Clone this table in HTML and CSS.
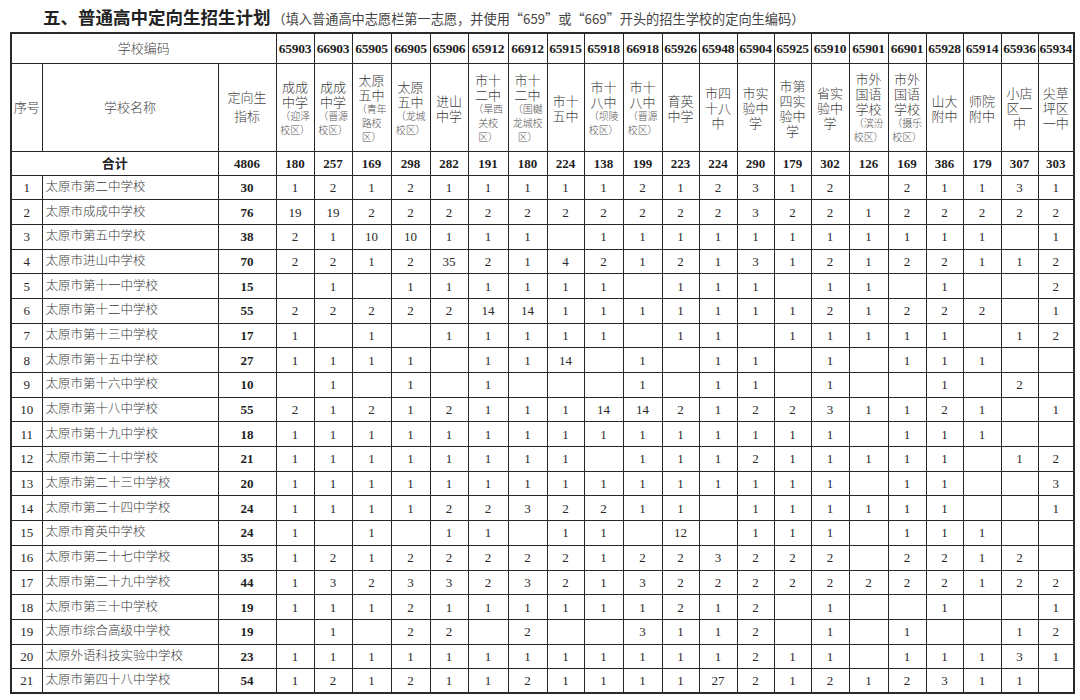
FILE: index.html
```html
<!DOCTYPE html>
<html lang="zh-CN">
<head>
<meta charset="utf-8">
<title>普通高中定向生招生计划</title>
<link rel="stylesheet" href="styles.css">
</head>
<body>
<div class="title"><span class="main">五、普通高中定向生招生计划</span><span class="note">（填入普通高中志愿栏第一志愿，并使用“659”或“669”开头的招生学校的定向生编码）</span></div>
<table class="plan">
<colgroup>
<col class="c-no"><col class="c-name"><col class="c-quota">
<col class="w38"><col class="w38"><col class="w39"><col class="w39"><col class="w38"><col class="w40"><col class="w39"><col class="w37"><col class="w39"><col class="w39"><col class="w37"><col class="w38"><col class="w37"><col class="w37"><col class="w38"><col class="w39"><col class="w38"><col class="w37"><col class="w38"><col class="w37"><col class="w36">
</colgroup>
<tr class="h1">
<td colspan="3" class="cn">学校编码</td>
<td class="code">65903</td><td class="code">66903</td><td class="code">65905</td><td class="code">66905</td><td class="code">65906</td><td class="code">65912</td><td class="code">66912</td><td class="code">65915</td><td class="code">65918</td><td class="code">66918</td><td class="code">65926</td><td class="code">65948</td><td class="code">65904</td><td class="code">65925</td><td class="code">65910</td><td class="code">65901</td><td class="code">66901</td><td class="code">65928</td><td class="code">65914</td><td class="code">65936</td><td class="code">65934</td>
</tr>
<tr class="h2">
<td class="cn">序号</td>
<td class="cn">学校名称</td>
<td class="cn quota-h">定向生<br>指标</td>
<td class="sch"><span class="b">成成<br>中学</span><span class="s">（迎泽<br>校区）</span></td>
<td class="sch"><span class="b">成成<br>中学</span><span class="s">（晋源<br>校区）</span></td>
<td class="sch"><span class="b">太原<br>五中</span><span class="s">（青年<br>路校<br>区）</span></td>
<td class="sch"><span class="b">太原<br>五中</span><span class="s">（龙城<br>校区）</span></td>
<td class="sch"><span class="b">进山<br>中学</span></td>
<td class="sch"><span class="b">市十<br>二中</span><span class="s">（旱西<br>关校<br>区）</span></td>
<td class="sch"><span class="b">市十<br>二中</span><span class="s">（国樾<br>龙城校<br>区）</span></td>
<td class="sch"><span class="b">市十<br>五中</span></td>
<td class="sch"><span class="b">市十<br>八中</span><span class="s">（坝陵<br>校区）</span></td>
<td class="sch"><span class="b">市十<br>八中</span><span class="s">（晋源<br>校区）</span></td>
<td class="sch"><span class="b">育英<br>中学</span></td>
<td class="sch"><span class="b">市四<br>十八<br>中</span></td>
<td class="sch"><span class="b">市实<br>验中<br>学</span></td>
<td class="sch"><span class="b">市第<br>四实<br>验中<br>学</span></td>
<td class="sch"><span class="b">省实<br>验中<br>学</span></td>
<td class="sch"><span class="b">市外<br>国语<br>学校</span><span class="s">（滨汾<br>校区）</span></td>
<td class="sch"><span class="b">市外<br>国语<br>学校</span><span class="s">（摄乐<br>校区）</span></td>
<td class="sch"><span class="b">山大<br>附中</span></td>
<td class="sch"><span class="b">师院<br>附中</span></td>
<td class="sch"><span class="b">小店<br>区一<br>中</span></td>
<td class="sch"><span class="b">尖草<br>坪区<br>一中</span></td>
</tr>
<tr class="tot">
<td colspan="2" class="cn bold">合计</td>
<td class="bold">4806</td>
<td class="bold">180</td><td class="bold">257</td><td class="bold">169</td><td class="bold">298</td><td class="bold">282</td><td class="bold">191</td><td class="bold">180</td><td class="bold">224</td><td class="bold">138</td><td class="bold">199</td><td class="bold">223</td><td class="bold">224</td><td class="bold">290</td><td class="bold">179</td><td class="bold">302</td><td class="bold">126</td><td class="bold">169</td><td class="bold">386</td><td class="bold">179</td><td class="bold">307</td><td class="bold">303</td>
</tr>
<tr class="row"><td>1</td><td class="name">太原市第二中学校</td><td class="bold">30</td><td>1</td><td>2</td><td>1</td><td>2</td><td>1</td><td>1</td><td>1</td><td>1</td><td>1</td><td>2</td><td>1</td><td>2</td><td>3</td><td>1</td><td>2</td><td></td><td>2</td><td>1</td><td>1</td><td>3</td><td>1</td></tr>
<tr class="row"><td>2</td><td class="name">太原市成成中学校</td><td class="bold">76</td><td>19</td><td>19</td><td>2</td><td>2</td><td>2</td><td>2</td><td>2</td><td>2</td><td>2</td><td>2</td><td>2</td><td>2</td><td>3</td><td>2</td><td>2</td><td>1</td><td>2</td><td>2</td><td>2</td><td>2</td><td>2</td></tr>
<tr class="row"><td>3</td><td class="name">太原市第五中学校</td><td class="bold">38</td><td>2</td><td>1</td><td>10</td><td>10</td><td>1</td><td>1</td><td>1</td><td></td><td>1</td><td>1</td><td>1</td><td>1</td><td>1</td><td>1</td><td>1</td><td>1</td><td>1</td><td>1</td><td>1</td><td></td><td>1</td></tr>
<tr class="row"><td>4</td><td class="name">太原市进山中学校</td><td class="bold">70</td><td>2</td><td>2</td><td>1</td><td>2</td><td>35</td><td>2</td><td>1</td><td>4</td><td>2</td><td>1</td><td>2</td><td>1</td><td>3</td><td>1</td><td>2</td><td>1</td><td>2</td><td>2</td><td>1</td><td>1</td><td>2</td></tr>
<tr class="row"><td>5</td><td class="name">太原市第十一中学校</td><td class="bold">15</td><td></td><td>1</td><td></td><td>1</td><td>1</td><td>1</td><td>1</td><td>1</td><td>1</td><td></td><td>1</td><td>1</td><td>1</td><td></td><td>1</td><td>1</td><td></td><td>1</td><td></td><td></td><td>2</td></tr>
<tr class="row"><td>6</td><td class="name">太原市第十二中学校</td><td class="bold">55</td><td>2</td><td>2</td><td>2</td><td>2</td><td>2</td><td>14</td><td>14</td><td>1</td><td>1</td><td>1</td><td>1</td><td>1</td><td>1</td><td>1</td><td>2</td><td>1</td><td>2</td><td>2</td><td>2</td><td></td><td>1</td></tr>
<tr class="row"><td>7</td><td class="name">太原市第十三中学校</td><td class="bold">17</td><td>1</td><td></td><td>1</td><td></td><td>1</td><td>1</td><td>1</td><td>1</td><td>1</td><td></td><td>1</td><td>1</td><td></td><td>1</td><td>1</td><td>1</td><td>1</td><td>1</td><td></td><td>1</td><td>2</td></tr>
<tr class="row"><td>8</td><td class="name">太原市第十五中学校</td><td class="bold">27</td><td>1</td><td>1</td><td>1</td><td>1</td><td></td><td>1</td><td>1</td><td>14</td><td></td><td>1</td><td></td><td>1</td><td>1</td><td></td><td>1</td><td></td><td>1</td><td>1</td><td>1</td><td></td><td></td></tr>
<tr class="row"><td>9</td><td class="name">太原市第十六中学校</td><td class="bold">10</td><td></td><td>1</td><td></td><td>1</td><td></td><td>1</td><td></td><td></td><td></td><td>1</td><td></td><td>1</td><td>1</td><td></td><td>1</td><td></td><td></td><td>1</td><td></td><td>2</td><td></td></tr>
<tr class="row"><td>10</td><td class="name">太原市第十八中学校</td><td class="bold">55</td><td>2</td><td>1</td><td>2</td><td>1</td><td>2</td><td>1</td><td>1</td><td>1</td><td>14</td><td>14</td><td>2</td><td>1</td><td>2</td><td>2</td><td>3</td><td>1</td><td>1</td><td>2</td><td>1</td><td></td><td>1</td></tr>
<tr class="row"><td>11</td><td class="name">太原市第十九中学校</td><td class="bold">18</td><td>1</td><td>1</td><td>1</td><td>1</td><td>1</td><td>1</td><td>1</td><td>1</td><td>1</td><td>1</td><td>1</td><td>1</td><td>1</td><td>1</td><td>1</td><td></td><td>1</td><td>1</td><td>1</td><td></td><td></td></tr>
<tr class="row"><td>12</td><td class="name">太原市第二十中学校</td><td class="bold">21</td><td>1</td><td>1</td><td>1</td><td>1</td><td>1</td><td>1</td><td>1</td><td>1</td><td></td><td>1</td><td>1</td><td>1</td><td>2</td><td>1</td><td>1</td><td>1</td><td>1</td><td>1</td><td></td><td>1</td><td>2</td></tr>
<tr class="row"><td>13</td><td class="name">太原市第二十三中学校</td><td class="bold">20</td><td>1</td><td>1</td><td>1</td><td>1</td><td>1</td><td>1</td><td>1</td><td>1</td><td>1</td><td>1</td><td>1</td><td>1</td><td>1</td><td>1</td><td>1</td><td></td><td>1</td><td>1</td><td></td><td></td><td>3</td></tr>
<tr class="row"><td>14</td><td class="name">太原市第二十四中学校</td><td class="bold">24</td><td>1</td><td>1</td><td>1</td><td>1</td><td>2</td><td>2</td><td>3</td><td>2</td><td>2</td><td>1</td><td>1</td><td></td><td>1</td><td>1</td><td>1</td><td>1</td><td>1</td><td>1</td><td></td><td></td><td>1</td></tr>
<tr class="row"><td>15</td><td class="name">太原市育英中学校</td><td class="bold">24</td><td>1</td><td></td><td>1</td><td></td><td>1</td><td>1</td><td></td><td>1</td><td>1</td><td></td><td>12</td><td></td><td>1</td><td>1</td><td>1</td><td></td><td>1</td><td>1</td><td>1</td><td></td><td></td></tr>
<tr class="row"><td>16</td><td class="name">太原市第二十七中学校</td><td class="bold">35</td><td>1</td><td>2</td><td>1</td><td>2</td><td>2</td><td>2</td><td>2</td><td>2</td><td>1</td><td>2</td><td>2</td><td>3</td><td>2</td><td>2</td><td>2</td><td></td><td>2</td><td>2</td><td>1</td><td>2</td><td></td></tr>
<tr class="row"><td>17</td><td class="name">太原市第二十九中学校</td><td class="bold">44</td><td>1</td><td>3</td><td>2</td><td>3</td><td>3</td><td>2</td><td>3</td><td>2</td><td>1</td><td>3</td><td>2</td><td>2</td><td>2</td><td>2</td><td>2</td><td>2</td><td>2</td><td>2</td><td>1</td><td>2</td><td>2</td></tr>
<tr class="row"><td>18</td><td class="name">太原市第三十中学校</td><td class="bold">19</td><td>1</td><td>1</td><td>1</td><td>2</td><td>1</td><td>1</td><td>1</td><td>1</td><td>1</td><td>1</td><td>2</td><td>1</td><td>2</td><td></td><td>1</td><td></td><td></td><td>1</td><td></td><td></td><td>1</td></tr>
<tr class="row"><td>19</td><td class="name">太原市综合高级中学校</td><td class="bold">19</td><td></td><td>1</td><td></td><td>2</td><td>2</td><td></td><td>2</td><td></td><td></td><td>3</td><td>1</td><td>1</td><td>2</td><td></td><td>1</td><td></td><td>1</td><td></td><td></td><td>1</td><td>2</td></tr>
<tr class="row"><td>20</td><td class="name">太原外语科技实验中学校</td><td class="bold">23</td><td>1</td><td>1</td><td>1</td><td>1</td><td>1</td><td>1</td><td>1</td><td>1</td><td>1</td><td>1</td><td>1</td><td>1</td><td>2</td><td>1</td><td>1</td><td></td><td>1</td><td>1</td><td>1</td><td>3</td><td>1</td></tr>
<tr class="row"><td>21</td><td class="name">太原市第四十八中学校</td><td class="bold">54</td><td>1</td><td>2</td><td>1</td><td>2</td><td>1</td><td>1</td><td>2</td><td>1</td><td>1</td><td>1</td><td>1</td><td>27</td><td>2</td><td>1</td><td>2</td><td>1</td><td>2</td><td>3</td><td>1</td><td>1</td><td></td></tr>
</table>
</body>
</html>
```

FILE: styles.css
```css
html, body {
  margin: 0;
  padding: 0;
  background: #ffffff;
}

body {
  font-family: "Liberation Serif", "Noto Sans CJK SC", serif;
  color: #2a2a2a;
}

.title {
  height: 32px;
  box-sizing: border-box;
  padding: 5px 0 0 43px;
  white-space: nowrap;
  line-height: 24px;
}

.title .main {
  font-family: "Noto Sans CJK SC", sans-serif;
  font-weight: 700;
  font-size: 17.5px;
  color: #222;
}

.title .note {
  font-family: "Noto Sans CJK SC", sans-serif;
  font-size: 13.2px;
  color: #444;
  margin-left: 2px;
}

.plan {
  margin-left: 10px;
  width: 1063px;
  border-collapse: collapse;
  table-layout: fixed;
  border: 2px solid #2a2a2a;
}

.plan td {
  border: 1px solid #262626;
  padding: 0;
  text-align: center;
  vertical-align: middle;
  font-size: 13px;
  line-height: 15px;
  white-space: nowrap;
  overflow: hidden;
}

.c-no { width: 31px; }
.c-name { width: 176px; }
.c-quota { width: 58px; }
.w36 { width: 36px; }
.w37 { width: 37px; }
.w38 { width: 38px; }
.w39 { width: 39px; }
.w40 { width: 40px; }

.h1 { height: 30px; }
.h2 { height: 88px; }
.tot { height: 24px; }
.row { height: 24.7px; }

.cn {
  color: #444;
  font-weight: 300;
}

.code {
  font-weight: 700;
  font-size: 13.5px !important;
  letter-spacing: -0.2px;
  color: #1e1e1e;
}

.quota-h {
  line-height: 19px !important;
}

.sch {
  padding-top: 3px !important;
}

.sch .b {
  display: block;
  font-weight: 300;
  font-size: 13px;
  line-height: 15px;
  color: #3a3a3a;
}

.sch .s {
  display: block;
  font-weight: 300;
  font-size: 10px;
  line-height: 14px;
  color: #555;
  letter-spacing: -0.2px;
}

.bold {
  font-weight: 700;
  color: #1e1e1e;
}

.cn.bold {
  font-weight: 700;
  color: #222;
}

.name {
  text-align: left !important;
  padding-left: 3px !important;
  font-weight: 300;
  font-size: 12.5px !important;
  color: #3a3a3a;
}
```
